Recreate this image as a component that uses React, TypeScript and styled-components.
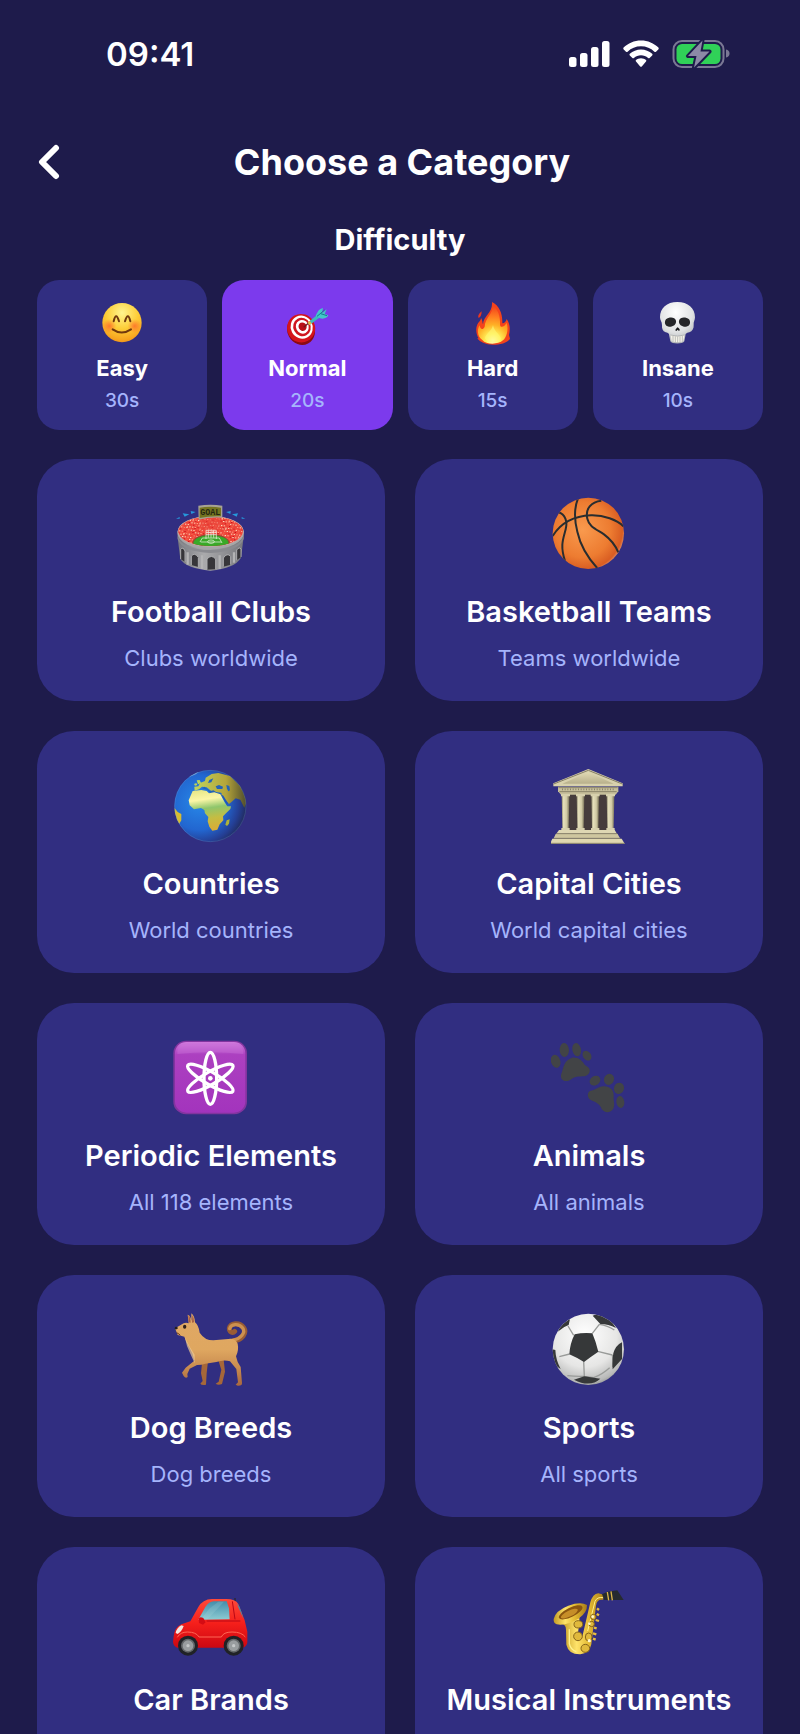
import React, { useState } from 'react';
import styled, { createGlobalStyle } from 'styled-components';

const GlobalStyle = createGlobalStyle`
  * {
    box-sizing: border-box;
  }

  body {
    margin: 0;
    background: #1e1b4b;
    color: #ffffff;
    font-family: Inter, 'Liberation Sans', sans-serif;
  }

  button {
    border: 0;
    padding: 0;
    color: inherit;
    font: inherit;
    cursor: pointer;
  }
`;

/* ---------- status bar icons ---------- */

const SignalIcon = () => (
  <svg width="41" height="28" viewBox="0 0 41 28" fill="#fff" aria-hidden="true">
    <rect x="0" y="17" width="7.500" height="10" rx="2.500" />
    <rect x="11" y="13" width="7.500" height="14" rx="2.500" />
    <rect x="22" y="7" width="7.500" height="20" rx="2.500" />
    <rect x="33" y="1" width="7.500" height="26" rx="2.500" />
  </svg>
);

const WifiIcon = () => (
  <svg width="36" height="28" viewBox="0 0 36 28" fill="#fff" aria-hidden="true">
    <path d="M18 0.5C24.800 0.500 31 3.200 35.400 7.600C35.900 8.100 35.900 8.700 35.500 9.200L33 11.700C32.500 12.200 31.900 12.200 31.400 11.700C27.800 8.300 23.200 6.300 18 6.300C12.800 6.300 8.200 8.300 4.600 11.700C4.100 12.200 3.500 12.200 3 11.700L0.500 9.200C0.100 8.700 0.100 8.100 0.600 7.600C5 3.200 11.200 0.500 18 0.500Z" />
    <path d="M18 9.500C22.300 9.500 26.200 11.200 29.200 13.800C29.700 14.300 29.700 14.900 29.200 15.400L26.600 17.900C26.100 18.300 25.600 18.300 25.100 17.900C23.100 16.300 20.700 15.300 18 15.300C15.300 15.300 12.900 16.300 10.900 17.900C10.400 18.300 9.900 18.300 9.400 17.900L6.800 15.400C6.300 14.900 6.300 14.300 6.800 13.800C9.800 11.200 13.700 9.500 18 9.500Z" />
    <path d="M18 18.300C20 18.300 21.700 19 23 20.100C23.500 20.600 23.500 21.100 23 21.600L18.800 26.400C18.300 26.900 17.700 26.900 17.200 26.400L13 21.600C12.500 21.100 12.500 20.600 13 20.100C14.300 19 16 18.300 18 18.300Z" />
  </svg>
);

const BatteryIcon = () => (
  <svg width="58" height="30" viewBox="0 0 58 30" aria-hidden="true">
    <rect x="1.500" y="2" width="50" height="26" rx="8.500" fill="none" stroke="#7a7894" strokeWidth="2" />
    <path d="M54 10.500C56.500 11 57.500 12.500 57.500 14.500S56.500 18 54 18.500Z" fill="#7a7894" />
    <rect x="4.500" y="5" width="44" height="20" rx="5.500" fill="#30d158" />
    <path
      d="M30.500 1.500L16 17H24.500L22 28.500L37.500 12.500H28.500Z"
      fill="#8c8aa6"
      stroke="#1e1b4b"
      strokeWidth="4"
      strokeLinejoin="round"
      paintOrder="stroke"
    />
  </svg>
);

const ChevronIcon = () => (
  <svg width="24" height="36" viewBox="0 0 24 36" fill="none" aria-hidden="true">
    <path d="M20 4L6 18L20 32" stroke="#fff" strokeWidth="6" strokeLinecap="round" strokeLinejoin="round" />
  </svg>
);

/* ---------- difficulty icons ---------- */

const SmileIcon = () => (
  <svg viewBox="204 87 144 144" aria-hidden="true">
    <defs>
      <radialGradient id="smileFace" cx="0.5" cy="0.25" r="0.8">
        <stop offset="0" stopColor="#fff48f" />
        <stop offset="0.5" stopColor="#fdce38" />
        <stop offset="0.85" stopColor="#f7a51f" />
        <stop offset="1" stopColor="#e98a18" />
      </radialGradient>
      <radialGradient id="smileCheek">
        <stop offset="0" stopColor="#ff5a2a" stopOpacity="0.7" />
        <stop offset="1" stopColor="#ff5a2a" stopOpacity="0" />
      </radialGradient>
    </defs>
    <circle cx="276" cy="158" r="59" fill="url(#smileFace)" />
    <circle cx="238" cy="168" r="21" fill="url(#smileCheek)" />
    <circle cx="314" cy="168" r="21" fill="url(#smileCheek)" />
    <g fill="none" stroke="#70380d" strokeWidth="6" strokeLinecap="round">
      <path d="M251 154Q258 124 267 154" />
      <path d="M285 154Q294 124 301 154" />
      <path d="M248 178Q275 197 303 178" />
    </g>
  </svg>
);

const TargetIcon = () => (
  <svg viewBox="759 87 144 144" aria-hidden="true">
    <g transform="rotate(-28 813 176)">
      <ellipse cx="811" cy="180" rx="41" ry="45" fill="#8c0a12" />
      <ellipse cx="814" cy="175" rx="42" ry="43" fill="#d4141c" />
      <ellipse cx="817" cy="173" rx="33" ry="35" fill="#fff" />
      <ellipse cx="818" cy="173" rx="26" ry="28" fill="#cf1620" />
      <ellipse cx="819" cy="173" rx="19" ry="21" fill="#fff" />
      <ellipse cx="820" cy="173" rx="12" ry="13" fill="#b90f18" />
    </g>
    <path d="M821 172L842 154" stroke="#6e1a1e" strokeWidth="4" />
    <path d="M835 157L861 135L868 143L839 165Q834 164 835 157Z" fill="#3db9bd" />
    <path d="M833 158L839 153L845 160L838 165Z" fill="#e8b93c" />
    <path d="M857 138C863 124 867 117 879 114L876 129L890 118L884 132L895 136C890 148 873 148 864 142Z" fill="#43c7c9" />
    <path d="M861 139L884 120M872 131L891 137" stroke="#147d8d" strokeWidth="3" fill="none" />
  </svg>
);

const FireIcon = () => (
  <svg viewBox="206 87 144 144" aria-hidden="true">
    <defs>
      <radialGradient id="fire" gradientUnits="userSpaceOnUse" cx="278" cy="212" r="105">
        <stop offset="0" stopColor="#ffffd8" />
        <stop offset="0.2" stopColor="#fff15a" />
        <stop offset="0.45" stopColor="#ffb126" />
        <stop offset="0.7" stopColor="#ff7a20" />
        <stop offset="1" stopColor="#f0401c" />
      </radialGradient>
    </defs>
    <path d="M275 96C297 107 307 131 306 160C313 160 317 154 319 147C331 164 329 182 326 195L329 206C321 219 298 224 278 224C256 224 237 216 231 204L235 205C225 190 226 168 234 158C239 152 242 149 242 143C247 151 246 158 248 163C249 138 278 129 275 96Z" fill="#f4431b" />
    <path d="M277 105C294 120 300 138 299 164C301 177 314 168 319 158C326 180 318 203 308 211C294 224 258 225 246 210C230 200 230 176 238 166C240 180 248 180 253 170C254 143 279 132 277 105Z" fill="url(#fire)" />
    <path d="M244 124C234 133 232 139 235 144C241 142 244 134 244 124Z" fill="#ed361d" />
    <path d="M278 165C275 183 256 190 254 205C262 222 293 222 302 207C300 193 281 185 278 165Z" fill="#fff675" opacity="0.6" />
  </svg>
);

const SkullIcon = () => (
  <svg viewBox="762 87 144 144" aria-hidden="true">
    <defs>
      <radialGradient id="skull" cx="0.45" cy="0.25" r="0.8">
        <stop offset="0" stopColor="#ffffff" />
        <stop offset="0.6" stopColor="#dfe1e2" />
        <stop offset="1" stopColor="#a5a9ad" />
      </radialGradient>
    </defs>
    <path d="M832 96C864 96 885 114 885 142C885 151 880 155 881 166C882 176 877 184 868 187C858 190 857 190 856 198L853 214C849 223 815 223 811 214L808 198C807 190 806 190 797 187C788 184 785 176 786 166C786 155 780 151 780 142C780 114 800 96 832 96Z" fill="url(#skull)" />
    <path d="M798 148C807 140 825 140 828 152C830 164 818 171 807 170C794 169 792 156 798 148Z" fill="#252629" />
    <path d="M867 148C858 140 840 140 837 152C835 164 847 171 858 170C871 169 873 156 867 148Z" fill="#252629" />
    <path d="M833 172C827 177 824 182 829 183L833 179L837 183C842 181 838 176 833 172Z" fill="#17181a" />
    <path d="M812 195Q833 202 853 195L850 214Q833 220 815 214Z" fill="#f5f3e9" />
    <path d="M811 195Q833 202 854 195M819 198V215M826 199V217M833 200V218M840 199V217M847 198V215" fill="none" stroke="#9fa1a3" strokeWidth="2" />
  </svg>
);

/* ---------- category icons ---------- */

const crowdColors = ['#ffc9a8', '#f2382c', '#ff9b7b', '#cf1218', '#fbd9bd', '#ff6248'];

const StadiumIcon = () => (
  <svg viewBox="69 51 228 228" aria-hidden="true">
    <defs>
      <clipPath id="stadiumBowl">
        <ellipse cx="182" cy="157" rx="97" ry="44" />
      </clipPath>
      <linearGradient id="stadiumWall">
        <stop offset="0" stopColor="#77787e" />
        <stop offset="0.4" stopColor="#aaaaac" />
        <stop offset="1" stopColor="#77787d" />
      </linearGradient>
    </defs>
    <path d="M78 119L89 114V119ZM98 103L118 106L104 113ZM122 96L137 99L124 105Z" fill="#2698dc" />
    <path d="M286 119L275 114V119ZM264 103L246 106L260 113ZM242 96L228 99L241 105Z" fill="#2698dc" />
    <path d="M83 158V177L91 241Q110 269 181 275Q255 268 273 236L281 174V157Z" fill="url(#stadiumWall)" />
    <ellipse cx="182" cy="161" rx="100" ry="50" fill="#a6a6a7" />
    <ellipse cx="182" cy="157" rx="99" ry="46" fill="#c9a8a6" />
    <g clipPath="url(#stadiumBowl)">
      <rect x="80" y="105" width="205" height="100" fill="#ed493e" />
      {Array.from({ length: 420 }, (_, i) => (
        <rect
          key={i}
          x={82 + ((i * 67) % 203)}
          y={112 + ((i * 37) % 89)}
          width="4"
          height="3"
          fill={crowdColors[(i * 5 + (i % 7)) % crowdColors.length]}
        />
      ))}
      <path d="M154 113H214L211 155H151Z" fill="#e9483c" opacity="0.5" />
      <ellipse cx="183" cy="192" rx="56" ry="27" fill="#8e4a34" />
      <ellipse cx="183" cy="194" rx="53" ry="26" fill="#39a928" />
    </g>
    <path d="M150 189L157 177H208L216 192M152 189H214M168 180V154H199V180M168 160H199M175 154V176M183 154V176M191 154V176M168 167H199" fill="none" stroke="#f7f8ee" strokeWidth="2" />
    <ellipse cx="183" cy="188" rx="10" ry="5" fill="none" stroke="#f7f8ee" strokeWidth="2" />
    <path d="M83 170Q92 211 182 213Q272 210 281 168V180Q266 218 182 222Q95 218 83 180Z" fill="#8a8b90" />
    <g fill="#37363a" stroke="#aeaeb0" strokeWidth="3">
      <path d="M92 240V211Q99 202 105 216V249" />
      <path d="M124 258V231Q134 219 145 235V264" />
      <path d="M171 272V240Q184 225 197 240V271" />
      <path d="M220 263V237Q231 220 242 232V257" />
      <path d="M260 244V213Q268 202 273 210V234" />
    </g>
    <path d="M113 220V257M156 229V270M209 229V270M252 220V251" stroke="#b4b4b5" strokeWidth="7" />
    <path d="M145 80Q181 75 217 80V116Q181 113 146 122Z" fill="#a7a393" />
    <path d="M149 86Q181 81 213 86V112Q181 110 149 117Z" fill="#747420" />
    <text x="181" y="108" textAnchor="middle" fontFamily="Liberation Mono, monospace" fontWeight="700" fontSize="25" fill="#252713">GOAL</text>
  </svg>
);

const BasketballIcon = () => (
  <svg viewBox="63 51 228 228" aria-hidden="true">
    <defs>
      <radialGradient id="basketball" cx="0.42" cy="0.45" r="0.6">
        <stop offset="0" stopColor="#f99a4e" />
        <stop offset="0.65" stopColor="#ed7c31" />
        <stop offset="0.93" stopColor="#d95d22" />
        <stop offset="1" stopColor="#dd8c66" />
      </radialGradient>
      <clipPath id="basketballClip">
        <circle cx="175" cy="163" r="107" />
      </clipPath>
    </defs>
    <circle cx="175" cy="163" r="107" fill="url(#basketball)" />
    <g clipPath="url(#basketballClip)" fill="none" stroke="#292d2f" strokeWidth="6">
      <path d="M68 171C93 131 133 111 183 109C222 108 260 122 282 143" />
      <path d="M144 58C130 93 134 127 142 158C150 195 172 235 204 270" />
      <path d="M214 65C184 68 165 89 172 119C178 145 200 151 222 166C241 180 254 194 265 220" />
      <path d="M85 100C106 106 113 127 107 151C99 181 90 200 105 246" />
    </g>
  </svg>
);

const GlobeIcon = () => (
  <svg viewBox="69 54 228 228" aria-hidden="true">
    <defs>
      <radialGradient id="ocean" cx="0.34" cy="0.45" r="0.7">
        <stop offset="0" stopColor="#2788e8" />
        <stop offset="0.55" stopColor="#2266d0" />
        <stop offset="0.8" stopColor="#243f95" />
        <stop offset="1" stopColor="#20264f" />
      </radialGradient>
      <linearGradient id="africa" x1="0" y1="0" x2="0.15" y2="1">
        <stop offset="0" stopColor="#e4e582" />
        <stop offset="0.28" stopColor="#fbf6a7" />
        <stop offset="0.5" stopColor="#8fc66c" />
        <stop offset="0.75" stopColor="#c4bd43" />
        <stop offset="1" stopColor="#d6ae38" />
      </linearGradient>
      <linearGradient id="asia">
        <stop offset="0" stopColor="#bed45e" />
        <stop offset="0.6" stopColor="#b5a53a" />
        <stop offset="1" stopColor="#4c4a2c" />
      </linearGradient>
      <clipPath id="globeClip">
        <circle cx="181" cy="168" r="108" />
      </clipPath>
    </defs>
    <circle cx="181" cy="168" r="108" fill="url(#ocean)" />
    <g clipPath="url(#globeClip)">
      <path d="M167 83L185 72L205 69L240 78L271 109L291 154L283 173L271 149L257 145L247 154L237 162L214 136L215 129L202 127L189 125L181 121L170 112L156 110L147 118L134 122L133 110L145 109L150 99L165 93Z" fill="url(#asia)" />
      <path d="M197 109L207 105L219 110L217 117L201 117ZM229 105L238 108L240 121L235 124L231 116ZM163 110L181 124L190 121L202 128L212 128L211 133L184 131L172 119L157 115ZM178 90L190 85L184 97L174 99Z" fill="#2463b7" />
      <path d="M128 123L154 120L170 123L177 130L193 127L211 133L224 157L232 169L243 169L241 177L228 190L219 199L220 211L209 223L202 239L187 242L178 230L173 214L175 201L165 190L163 180L153 174L132 178L119 166L116 151Z" fill="url(#africa)" />
      <path d="M213 133L220 137L235 161L230 164Z" fill="#1f57bb" />
      <path d="M239 208L230 211L226 224L231 228L237 221Z" fill="#adb23b" />
      <path d="M73 173L83 186L94 192L94 211L87 223L83 237L70 203Z" fill="#d8bc32" />
      <path d="M140 91L149 90L153 99L144 103ZM139 99L132 102L135 107L142 105Z" fill="#bbd45a" />
      <path d="M110 77L129 68L147 65L137 73L119 80Z" fill="#7aa7d3" />
    </g>
    <circle cx="181" cy="168" r="107" fill="none" stroke="#7aa5d5" strokeWidth="2" opacity="0.35" />
  </svg>
);

const TempleIcon = () => (
  <svg viewBox="63 54 228 228" aria-hidden="true">
    <defs>
      <linearGradient id="templeColumn">
        <stop offset="0" stopColor="#8e886d" />
        <stop offset="0.25" stopColor="#e6e0bc" />
        <stop offset="0.65" stopColor="#d0c9a4" />
        <stop offset="1" stopColor="#777057" />
      </linearGradient>
      <linearGradient id="templeRoof" x1="0" y1="0" x2="0" y2="1">
        <stop offset="0" stopColor="#e1dab4" />
        <stop offset="1" stopColor="#b8b08c" />
      </linearGradient>
    </defs>
    <rect x="103" y="132" width="142" height="112" fill="#463c3c" />
    <path d="M175 57L278 100V109H70V100Z" fill="#d8d1ad" />
    <path d="M175 66L251 101H97Z" fill="url(#templeRoof)" />
    <path d="M71 102L175 61L277 102" fill="none" stroke="#857e66" strokeWidth="3" />
    <path d="M84 110H265V124L257 134H93L84 124Z" fill="#c7bf9b" />
    <path d="M85 113H263M88 125H260" stroke="#8a8369" strokeWidth="3" />
    <path d="M96 118H253" stroke="#8a8369" strokeWidth="5" strokeDasharray="3 5" />
    {[95, 140, 184, 230].map((x) => (
      <g key={x}>
        <path d={`M${x} 137H${x + 23}L${x + 21} 235H${x + 2}Z`} fill="url(#templeColumn)" />
        <path d={`M${x - 2} 132H${x + 25}V139H${x - 2}ZM${x - 1} 234H${x + 24}V243H${x - 1}Z`} fill="#d7d0ad" />
      </g>
    ))}
    <path d="M87 240H254L261 251H79Z" fill="#ded7b3" />
    <path d="M77 252H263L270 265H71Z" fill="#cec69f" />
    <path d="M67 266H275L284 281H60Z" fill="#e0d8b0" />
    <path d="M79 251H262M71 265H271M61 280H284" stroke="#8b8469" strokeWidth="3" />
  </svg>
);

const AtomIcon = () => (
  <svg viewBox="69 45 228 228" aria-hidden="true">
    <defs>
      <linearGradient id="atomTile" x1="0" y1="0" x2="0" y2="1">
        <stop offset="0" stopColor="#d07add" />
        <stop offset="0.18" stopColor="#ac40c0" />
        <stop offset="1" stopColor="#a334bd" />
      </linearGradient>
    </defs>
    <rect x="70" y="47" width="221" height="221" rx="38" fill="#82349f" />
    <rect x="75" y="51" width="211" height="212" rx="34" fill="url(#atomTile)" />
    <path d="M82 87V79Q84 58 108 58H253Q277 58 280 79V87Q181 76 82 87Z" fill="#cf77dc" opacity="0.35" />
    <g fill="none" stroke="#fff" strokeWidth="10">
      <ellipse cx="181" cy="160" rx="19" ry="78" />
      <ellipse cx="181" cy="160" rx="19" ry="78" transform="rotate(60 181 160)" />
      <ellipse cx="181" cy="160" rx="19" ry="78" transform="rotate(120 181 160)" />
    </g>
    <circle cx="181" cy="160" r="7" fill="#fff" />
  </svg>
);

const PawsIcon = () => (
  <svg viewBox="63 45 228 228" fill="#424446" aria-hidden="true">
    <path d="M126 98C145 96 157 107 164 119C172 126 181 127 179 140C174 157 155 153 140 155C125 158 122 168 109 168C96 168 90 158 94 146C101 132 98 108 126 98Z" />
    <ellipse cx="77" cy="109" rx="14" ry="20" transform="rotate(-18 77 109)" />
    <ellipse cx="103" cy="75" rx="14" ry="21" transform="rotate(-3 103 75)" />
    <ellipse cx="140" cy="74" rx="13" ry="20" transform="rotate(-12 140 74)" />
    <ellipse cx="171" cy="92" rx="12" ry="16" transform="rotate(-36 171 92)" />
    <path d="M221 184C242 184 252 197 251 213C249 227 257 239 249 253C239 265 223 264 215 252C209 236 195 231 184 226C172 221 170 203 180 198C196 196 203 185 221 184Z" />
    <ellipse cx="195" cy="167" rx="17" ry="14" transform="rotate(-32 195 167)" />
    <ellipse cx="237" cy="163" rx="15" ry="17" transform="rotate(25 237 163)" />
    <ellipse cx="267" cy="190" rx="15" ry="17" transform="rotate(20 267 190)" />
    <ellipse cx="271" cy="231" rx="12" ry="18" transform="rotate(-8 271 231)" />
  </svg>
);

const DogIcon = () => (
  <svg viewBox="69 51 228 228" aria-hidden="true">
    <defs>
      <linearGradient id="dogCoat" x1="0" y1="0" x2="0" y2="1">
        <stop offset="0" stopColor="#e0a865" />
        <stop offset="0.5" stopColor="#dfa760" />
        <stop offset="0.75" stopColor="#c98c50" />
        <stop offset="1" stopColor="#a8673e" />
      </linearGradient>
    </defs>
    <path d="M250 138C278 134 291 113 281 98C268 80 241 84 238 100C238 111 248 116 254 109" fill="none" stroke="#995c35" strokeWidth="15" strokeLinecap="round" />
    <path d="M246 136C274 132 287 112 278 99C266 84 243 87 239 101" fill="none" stroke="#cd904f" strokeWidth="10" strokeLinecap="round" />
    <path d="M157 195L153 235L158 258L151 266Q155 272 168 269L170 235L174 199ZM203 190L214 224L206 260L197 266Q204 272 216 267L225 230L221 194Z" fill="#a66739" />
    <path d="M116 85L113 59Q121 60 124 77L124 55Q134 62 135 82Q146 91 149 113Q164 136 190 136L235 132Q256 129 263 146Q267 165 258 184Q261 202 272 216L276 264Q277 273 263 272L257 269L264 262L259 222L240 199Q222 193 199 201L166 206Q155 210 141 210L119 221L112 237L113 246Q107 252 101 243L96 233L107 218L133 197L128 177L119 159Q108 140 103 125Q92 122 83 120L81 115L75 100Q86 94 101 85Q108 81 116 85Z" fill="url(#dogCoat)" />
    <path d="M115 60Q122 66 122 83L116 82ZM127 60Q133 69 132 82L126 83Z" fill="#a85f45" />
    <path d="M104 125Q117 154 134 179L134 205Q121 177 111 153Z" fill="#f0ca92" opacity="0.7" />
    <path d="M75 96Q83 94 84 100Q78 106 74 101Z" fill="#25201f" />
    <ellipse cx="104" cy="95" rx="5" ry="6" fill="#30201a" />
    <path d="M80 113Q88 117 91 121" fill="none" stroke="#63351f" strokeWidth="3" />
  </svg>
);

const SoccerIcon = () => (
  <svg viewBox="63 51 228 228" aria-hidden="true">
    <defs>
      <radialGradient id="soccer" cx="0.45" cy="0.3" r="0.75">
        <stop offset="0" stopColor="#ffffff" />
        <stop offset="0.6" stopColor="#e6e6e5" />
        <stop offset="0.88" stopColor="#b9bab9" />
        <stop offset="1" stopColor="#858786" />
      </radialGradient>
      <clipPath id="soccerClip">
        <circle cx="175" cy="163" r="107" />
      </clipPath>
    </defs>
    <circle cx="175" cy="163" r="107" fill="url(#soccer)" />
    <g clipPath="url(#soccerClip)">
      <path d="M131 121L114 93M187 115L208 88M203 169L247 180M161 199L163 244M119 177L88 185M163 244Q137 245 112 242M163 244L191 248Q217 238 239 218M247 180Q251 197 248 216M208 88Q233 91 253 105" fill="none" stroke="#999b99" strokeWidth="4" />
      <path d="M134 118Q160 112 187 115Q198 141 205 170Q184 184 162 201Q141 188 118 178Q120 145 134 118Z" fill="#363839" />
      <path d="M83 110Q93 85 120 72L116 90Q100 95 83 110ZM188 62Q210 49 237 68L258 99Q235 87 211 87ZM250 175Q257 151 276 142V192L248 223Q246 199 250 175ZM132 254L163 244L211 251Q180 279 132 254ZM63 162L76 165Q77 194 92 222L69 206Z" fill="#363839" />
    </g>
  </svg>
);

const CarIcon = () => (
  <svg viewBox="69 132 228 228" aria-hidden="true">
    <defs>
      <linearGradient id="carBody" x1="0" y1="0" x2="0" y2="1">
        <stop offset="0" stopColor="#ff4a3a" />
        <stop offset="0.5" stopColor="#f51f1b" />
        <stop offset="1" stopColor="#cc0712" />
      </linearGradient>
      <linearGradient id="carGlass" x1="0" y1="0" x2="0" y2="1">
        <stop offset="0" stopColor="#438eab" />
        <stop offset="1" stopColor="#8dcbd2" />
      </linearGradient>
    </defs>
    <path d="M253 184V174H257V188Z" fill="#292633" />
    <path d="M71 289Q73 263 94 253L121 244L145 201Q158 178 186 177H229Q256 177 265 192L284 241L292 275V307Q291 319 279 323H82Q70 318 69 306Z" fill="url(#carBody)" />
    <path d="M145 239L166 201Q177 185 191 184H230L237 205L239 238Z" fill="url(#carGlass)" />
    <path d="M177 207L205 185H222L173 238H153Z" fill="#b3dce0" opacity="0.2" />
    <path d="M260 190L280 236Q276 219 269 201Z" fill="#438ba9" />
    <path d="M77 279Q79 265 94 256L101 258Q95 275 83 282Z" fill="#f3e6df" />
    <path d="M146 236Q149 228 160 234L167 247L159 254L147 249Z" fill="#d50c14" />
    <path d="M82 292Q91 276 112 276Q139 276 147 291H214Q220 276 246 276Q275 276 286 291" fill="none" stroke="#ff6654" strokeWidth="3" />
    <path d="M247 184L255 238M170 243H271" stroke="#b90715" strokeWidth="3" fill="none" />
    {[114, 251].map((x) => (
      <g key={x}>
        <circle cx={x} cy="317" r="30" fill="#202226" />
        <circle cx={x} cy="317" r="21" fill="#64686a" />
        <circle cx={x} cy="317" r="16" fill="#999d9f" />
        <circle cx={x} cy="317" r="5" fill="#c4c7c8" />
      </g>
    ))}
  </svg>
);

const SaxophoneIcon = () => (
  <svg viewBox="63 132 228 228" aria-hidden="true">
    <defs>
      <linearGradient id="brass">
        <stop offset="0" stopColor="#c29a24" />
        <stop offset="0.35" stopColor="#ffe36a" />
        <stop offset="0.65" stopColor="#e2b830" />
        <stop offset="1" stopColor="#a87b18" />
      </linearGradient>
    </defs>
    <path d="M102 244L145 218Q152 242 145 270L143 294Q151 308 158 286L181 187Q188 162 205 160L224 165L218 180Q201 177 198 197L184 313Q178 341 151 343Q116 344 109 314L108 270Q108 254 95 252Z" fill="url(#brass)" />
    <path d="M173 273L195 184Q201 170 219 173" fill="none" stroke="#fff08c" strokeWidth="3" />
    <path d="M71 237Q76 212 115 197Q152 184 171 195Q172 217 147 235Q111 258 80 253Q70 250 71 237Z" fill="url(#brass)" />
    <ellipse cx="122" cy="217" rx="39" ry="14" transform="rotate(-26 122 217)" fill="#8a5510" />
    <ellipse cx="118" cy="221" rx="28" ry="9" transform="rotate(-26 118 221)" fill="#c68e28" />
    <path d="M216 163L232 155L262 151L281 180L223 180Z" fill="#262a30" />
    <path d="M232 156L236 181M243 154L247 181" stroke="#dcb64a" strokeWidth="4" />
    <g fill="#e0b93c" stroke="#85631a" strokeWidth="3">
      <ellipse cx="145" cy="253" rx="13" ry="11" />
      <ellipse cx="144" cy="289" rx="13" ry="13" />
      <ellipse cx="166" cy="325" rx="13" ry="12" />
      <ellipse cx="176" cy="291" rx="10" ry="12" />
      <circle cx="185" cy="252" r="8" />
      <circle cx="190" cy="231" r="8" />
    </g>
    <path d="M201 205L207 210M200 222L207 226M197 240L207 243M192 263L200 265M189 280L199 283M189 296L197 299" stroke="#e8bd40" strokeWidth="7" />
    <path d="M118 268V311Q122 330 139 335" fill="none" stroke="#fff28f" strokeWidth="4" />
    <g fill="#fff8cf">
      <circle cx="178" cy="302" r="5" />
      <circle cx="178" cy="251" r="4" />
      <circle cx="188" cy="230" r="4" />
    </g>
  </svg>
);

/* ---------- data ---------- */

const difficulties = [
  { name: 'Easy', time: '30s', Icon: SmileIcon },
  { name: 'Normal', time: '20s', Icon: TargetIcon },
  { name: 'Hard', time: '15s', Icon: FireIcon },
  { name: 'Insane', time: '10s', Icon: SkullIcon },
];

const categories = [
  { name: 'Football Clubs', description: 'Clubs worldwide', Icon: StadiumIcon },
  { name: 'Basketball Teams', description: 'Teams worldwide', Icon: BasketballIcon },
  { name: 'Countries', description: 'World countries', Icon: GlobeIcon },
  { name: 'Capital Cities', description: 'World capital cities', Icon: TempleIcon },
  { name: 'Periodic Elements', description: 'All 118 elements', Icon: AtomIcon },
  { name: 'Animals', description: 'All animals', Icon: PawsIcon },
  { name: 'Dog Breeds', description: 'Dog breeds', Icon: DogIcon },
  { name: 'Sports', description: 'All sports', Icon: SoccerIcon },
  { name: 'Car Brands', description: 'Car brands', Icon: CarIcon },
  { name: 'Musical Instruments', description: 'All instruments', Icon: SaxophoneIcon },
];

const App: React.FC = () => {
  const [difficulty, setDifficulty] = useState('Normal');

  return (
    <Screen>
      <GlobalStyle />
      <StatusBar>
        <Clock>09:41</Clock>
        <StatusIcons>
          <SignalIcon />
          <WifiIcon />
          <BatteryIcon />
        </StatusIcons>
      </StatusBar>
      <Header>
        <BackButton type="button" aria-label="Back">
          <ChevronIcon />
        </BackButton>
        <Title>Choose a Category</Title>
      </Header>
      <Content>
        <SectionTitle id="difficulty">Difficulty</SectionTitle>
        <DifficultyGrid role="group" aria-labelledby="difficulty">
          {difficulties.map(({ name, time, Icon }) => (
            <DifficultyButton
              key={name}
              type="button"
              $selected={name === difficulty}
              aria-pressed={name === difficulty}
              onClick={() => setDifficulty(name)}
            >
              <IconBox $size={48}>
                <Icon />
              </IconBox>
              <DifficultyName>{name}</DifficultyName>
              <DifficultyTime>{time}</DifficultyTime>
            </DifficultyButton>
          ))}
        </DifficultyGrid>
        <CategoryGrid>
          {categories.map(({ name, description, Icon }) => (
            <CategoryCard key={name} type="button">
              <IconBox $size={76}>
                <Icon />
              </IconBox>
              <CategoryName>{name}</CategoryName>
              <CategoryDescription>{description}</CategoryDescription>
            </CategoryCard>
          ))}
        </CategoryGrid>
      </Content>
    </Screen>
  );
};

const Screen = styled.div`
  height: 100vh;
  display: flex;
  flex-direction: column;
  overflow: hidden;
`;

const StatusBar = styled.div`
  flex: none;
  height: 108px;
  padding: 0 70px 0 106px;
  display: flex;
  align-items: center;
  justify-content: space-between;
`;

const Clock = styled.time`
  font-size: 33px;
  font-weight: 600;
`;

const StatusIcons = styled.div`
  display: flex;
  align-items: center;
  gap: 13px;
`;

const Header = styled.header`
  flex: none;
  height: 108px;
  padding: 0 36px;
  display: grid;
  grid-template-columns: 40px 1fr 36px;
  align-items: center;
`;

const BackButton = styled.button`
  display: flex;
  background: none;
`;

const Title = styled.h1`
  margin: 0;
  font-size: 36px;
  font-weight: 700;
  line-height: 44px;
  text-align: center;
`;

const Content = styled.main`
  flex: 1;
  min-height: 0;
  padding: 6px 37px 37px;
  overflow-y: auto;
  scrollbar-width: none;
`;

const SectionTitle = styled.h2`
  margin: 0 0 22px;
  font-size: 29px;
  font-weight: 700;
  line-height: 36px;
  text-align: center;
`;

const DifficultyGrid = styled.div`
  display: grid;
  grid-template-columns: repeat(4, 1fr);
  gap: 15px;
  margin-bottom: 29px;
`;

const DifficultyButton = styled.button<{ $selected: boolean }>`
  && {
    padding: 19px 8px 17px;
  }
  display: flex;
  flex-direction: column;
  align-items: center;
  border-radius: 22px;
  background: ${({ $selected }) => ($selected ? '#7c3aed' : '#312e81')};
`;

const IconBox = styled.span<{ $size: number }>`
  display: block;
  width: ${({ $size }) => $size}px;
  height: ${({ $size }) => $size}px;

  svg {
    display: block;
    width: 100%;
    height: 100%;
  }
`;

const DifficultyName = styled.span`
  margin-top: 7px;
  font-size: 22px;
  font-weight: 700;
  line-height: 28px;
`;

const DifficultyTime = styled.span`
  margin-top: 7px;
  color: #a5b4fc;
  font-size: 19px;
  font-weight: 500;
  line-height: 24px;
`;

const CategoryGrid = styled.div`
  display: grid;
  grid-template-columns: repeat(2, 1fr);
  gap: 30px;
`;

const CategoryCard = styled.button`
  && {
    padding: 37px 12px 30px;
  }
  display: flex;
  flex-direction: column;
  align-items: center;
  border-radius: 37px;
  background: #312e81;
`;

const CategoryName = styled.span`
  margin-top: 23px;
  font-size: 29px;
  font-weight: 600;
  line-height: 34px;
  white-space: nowrap;
`;

const CategoryDescription = styled.span`
  margin-top: 16px;
  color: #a5b4fc;
  font-size: 22px;
  font-weight: 400;
  line-height: 26px;
`;

export default App;
